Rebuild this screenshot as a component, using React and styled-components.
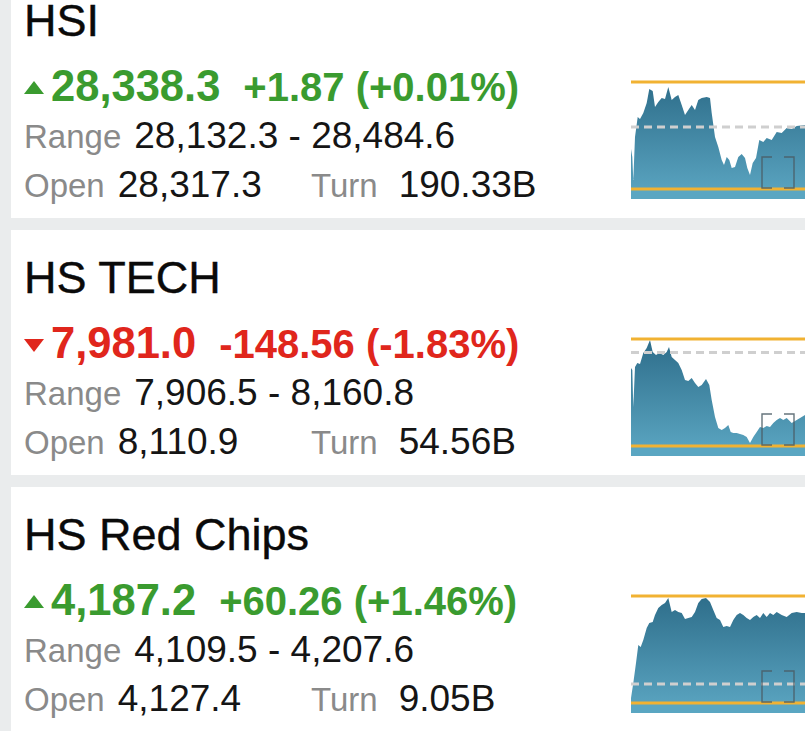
import React from "react";
import styled, { createGlobalStyle } from "styled-components";

const GlobalStyle = createGlobalStyle`
  html, body {
    margin: 0;
    padding: 0;
    background: #eaeced;
    overflow: hidden;
  }
  body {
    font-family: "Liberation Sans", Arial, Helvetica, sans-serif;
  }
`;

const UP = "#3a9b2f";
const DOWN = "#e0261c";

const indices = [
  {
    name: "HSI",
    up: true,
    last: "28,338.3",
    change: "+1.87 (+0.01%)",
    range: "28,132.3 - 28,484.6",
    open: "28,317.3",
    turn: "190.33B",
    prevClose: 49,
    points: [
      [0, 71], [1.3, 79], [2.3, 102], [4, 59], [6.7, 39], [9, 41], [12.3, 35], [15.7, 25],
      [18.3, 11], [21.7, 13], [24, 29], [27.3, 24], [30.7, 20], [34, 21], [37.3, 9], [40.7, 22],
      [44, 19], [47.3, 17], [50.7, 27], [54, 37], [57.3, 32], [60.7, 27], [64, 32], [67.3, 22],
      [70.7, 20], [75.7, 19], [79, 20], [80.7, 35], [84, 59], [87.3, 69], [90.7, 82], [93, 87],
      [95.7, 79], [98.3, 82], [100.7, 90], [104, 89], [107.3, 79], [110.7, 76], [114, 80],
      [116.3, 90], [119, 97], [121.7, 85], [125, 80], [128.3, 62], [132.3, 64], [135.7, 60],
      [140.7, 62], [145.7, 54], [150.7, 55], [155.7, 50], [160.7, 51], [165.7, 48], [174, 47],
    ],
  },
  {
    name: "HS TECH",
    up: false,
    last: "7,981.0",
    change: "-148.56 (-1.83%)",
    range: "7,906.5 - 8,160.8",
    open: "8,110.9",
    turn: "54.56B",
    prevClose: 17.5,
    points: [
      [0, 33], [1.3, 35], [2.3, 72], [4, 32], [6.3, 28], [9, 29], [12.3, 18], [15.7, 13],
      [19, 5], [21.7, 17], [25, 20], [28.3, 18], [32.3, 20], [35.7, 17], [38, 12], [40.7, 22],
      [44, 25], [47.3, 28], [50.7, 35], [54, 45], [57.3, 46], [60.7, 43], [64, 48], [67.3, 52],
      [70.7, 50], [75, 44], [78.3, 50], [80.7, 65], [84, 82], [87.3, 93], [90.7, 95], [94, 93],
      [97.3, 90], [99.7, 97], [102.3, 98], [105.7, 98], [109, 99], [112.3, 100], [115.7, 102],
      [119, 108], [122.3, 102], [125.7, 97], [129, 92], [132.3, 93], [135.7, 91], [139, 92],
      [142.3, 88], [145.7, 85], [149, 83], [152.3, 85], [155.7, 83], [160.7, 88], [165.7, 85],
      [170.7, 82], [174, 80],
    ],
  },
  {
    name: "HS Red Chips",
    up: true,
    last: "4,187.2",
    change: "+60.26 (+1.46%)",
    range: "4,109.5 - 4,207.6",
    open: "4,127.4",
    turn: "9.05B",
    prevClose: 92,
    points: [
      [0, 106], [2.3, 91], [5, 71], [7.3, 53], [9.7, 55], [12.3, 48], [15.7, 36], [18.3, 31],
      [21.7, 30], [24, 23], [27.3, 16], [30.7, 13], [34, 11], [37.3, 6], [40.7, 20], [44, 18],
      [47.3, 20], [50.7, 21], [54, 27], [57.3, 26], [60.7, 25], [64, 20], [67.3, 11], [70.7, 7],
      [75, 6], [79, 10], [82.3, 18], [85.7, 26], [89, 28], [92.3, 35], [95.7, 34], [99, 35],
      [102.3, 28], [105.7, 23], [109, 21], [112.3, 23], [115.7, 26], [119, 28], [122.3, 25],
      [125.7, 23], [129, 26], [132.3, 21], [135.7, 25], [139, 21], [142.3, 23], [145.7, 20],
      [150.7, 23], [155.7, 25], [160.7, 21], [165.7, 20], [170.7, 21], [174, 21],
    ],
  },
];

const List = styled.div`
  margin-top: -27px;
  display: flex;
  flex-direction: column;
  gap: 12px;
`;

const Card = styled.div`
  margin-left: 11px;
  height: 245px;
  background: #fff;
  display: flex;
  box-sizing: border-box;
  padding: 23px 0 0 13px;
  overflow: hidden;
`;

const Info = styled.div`
  flex: 1;
  min-width: 0;
  white-space: nowrap;
`;

const Name = styled.div`
  font-size: 45px;
  line-height: 50px;
  color: #0a0a0a;
  margin-bottom: 15px;
  -webkit-text-stroke: 0.4px #0a0a0a;
`;

const PriceRow = styled.div`
  font-size: 43.5px;
  line-height: 50px;
  font-weight: 700;
  color: ${({ $up }) => ($up ? UP : DOWN)};
`;

const Arrow = styled.span`
  display: inline-block;
  width: 0;
  height: 0;
  margin-right: 7px;
  border-left: 10px solid transparent;
  border-right: 10px solid transparent;
  ${({ $up }) =>
    $up
      ? `border-bottom: 13px solid ${UP}; vertical-align: 7px;`
      : `border-top: 13px solid ${DOWN}; vertical-align: 6px;`}
`;

const Change = styled.span`
  font-size: 40px;
  margin-left: 23px;
`;

const StatRow = styled.div`
  display: flex;
  align-items: baseline;
  font-size: 37px;
  line-height: 48px;
`;

const Cell = styled.div`
  width: 287px;
  display: flex;
  align-items: baseline;
`;

const Label = styled.span`
  font-size: 33px;
  color: #8a8a8a;
`;

const Value = styled.span`
  color: #151515;
  margin-left: ${({ $wide }) => ($wide ? "21px" : "13px")};
`;

const Chart = styled.svg`
  flex-shrink: 0;
  margin-top: 82px;
  display: block;
`;

function areaPath(points) {
  const line = points.map(([x, y], i) => `${i ? "L" : "M"}${x} ${y}`).join(" ");
  return `${line} L174 120 L0 120 Z`;
}

function Spark({ id, points, prevClose }) {
  return (
    <Chart width="174" height="121" viewBox="0 0 174 121">
      <defs>
        <linearGradient id={id} x1="0" y1="0" x2="0" y2="111" gradientUnits="userSpaceOnUse">
          <stop offset="0" stopColor="#2c6b88" />
          <stop offset="1" stopColor="#58a2be" />
        </linearGradient>
      </defs>
      <path d={areaPath(points)} fill={`url(#${id})`} />
      <rect x="0" y="112" width="174" height="9" fill="#5aa6c2" />
      <line x1="0" y1="4" x2="174" y2="4" stroke="#f1b232" strokeWidth="3" />
      <line x1="0" y1="111" x2="174" y2="111" stroke="#f1b232" strokeWidth="3" />
      <line
        x1="0"
        y1={prevClose}
        x2="174"
        y2={prevClose}
        stroke="#cfcfcf"
        strokeWidth="3"
        strokeDasharray="8 5"
      />
      <path
        d="M141 79 H131 V110 H141 M153 79 H163 V110 H153"
        fill="none"
        stroke="#4a5c64"
        strokeOpacity="0.85"
        strokeWidth="1.4"
      />
    </Chart>
  );
}

export default function App() {
  return (
    <>
      <GlobalStyle />
      <List>
        {indices.map((idx, i) => (
          <Card key={idx.name}>
            <Info>
              <Name>{idx.name}</Name>
              <PriceRow $up={idx.up}>
                <Arrow $up={idx.up} />
                <span>{idx.last}</span>
                <Change>{idx.change}</Change>
              </PriceRow>
              <StatRow>
                <Label>Range</Label>
                <Value>{idx.range}</Value>
              </StatRow>
              <StatRow>
                <Cell>
                  <Label>Open</Label>
                  <Value>{idx.open}</Value>
                </Cell>
                <Label>Turn</Label>
                <Value $wide>{idx.turn}</Value>
              </StatRow>
            </Info>
            <Spark id={`fill${i}`} points={idx.points} prevClose={idx.prevClose} />
          </Card>
        ))}
      </List>
    </>
  );
}
